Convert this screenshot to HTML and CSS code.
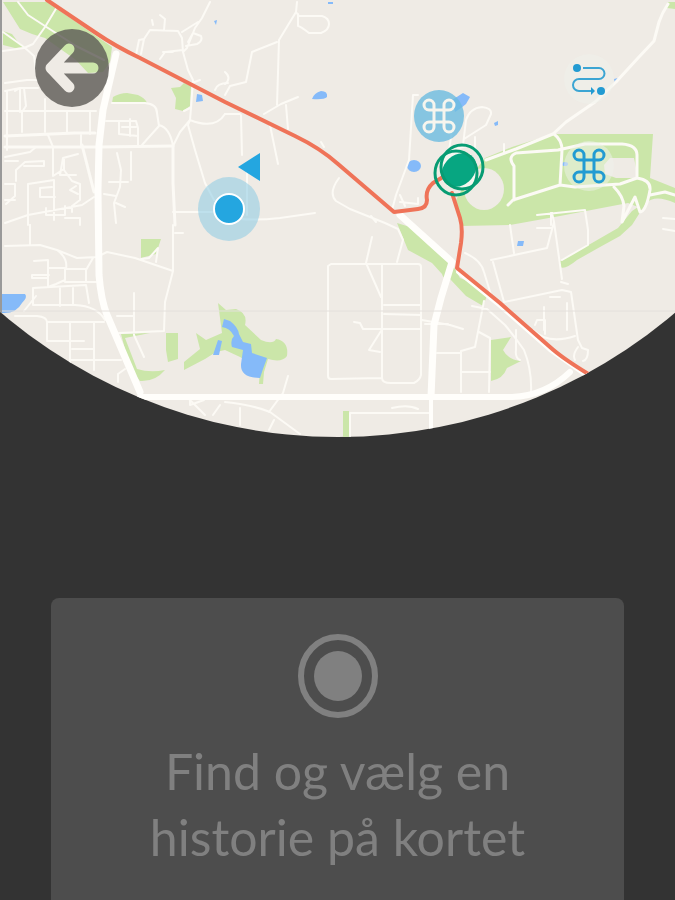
FILE: index.html
```html
<!DOCTYPE html>
<html lang="da">
<head>
<meta charset="utf-8">
<meta name="viewport" content="width=device-width, initial-scale=1">
<title>Historier på kortet</title>
<link rel="stylesheet" href="styles.css">
</head>
<body>
<main class="screen">
  <section class="map" aria-label="Kort">
    <svg class="map-art" viewBox="0 0 675 438" aria-hidden="true">
      <defs>
        <clipPath id="lens"><circle cx="338" cy="-82" r="519"/></clipPath>
      </defs>
      <g clip-path="url(#lens)">
        <rect class="land" width="675" height="438"/>

        <!-- parks -->
        <g class="park">
          <path d="M3 2H47L76 22L112 47L110 62L103 72L88 73L76 60L45 38L32 34L20 29Z"/>
          <path d="M3 31L12 34L18 42L25 47L15 48L3 45Z"/>
          <path d="M113 97Q120 93 127 93L138 95Q145 98 147 103L127 102L112 103Z"/>
          <path d="M171 88L180 87L184 83L191 86L190 106L183 111L175 109L176 98Z"/>
          <path d="M141 239H161L156 254L141 258Z"/>
          <path d="M485 158L512 147L553 134L653 134L650 178L675 188V203Q655 194 646 203L632 225L620 236L600 247L577 260Q565 270 560 267L560 261L592 243L618 228L632 211L638 207L628 203L560 216L510 225L461 226L456 200L466 182Z"/>
          <path d="M668 2H675V9L667 8Z"/>
          <path d="M397 223L410 227L430 242L452 264L460 278L475 284L487 296L483 306L466 296L450 279Q444 281 442 274L432 263L408 250Z"/>
          <path d="M166 333H178V359L168 362L166 350Z"/>
          <path d="M121 334L150 333L125 338L137 369Q150 373 165 370Q155 382 140 381L130 368Z"/>
          <path d="M184 370V362L200 349L196 333L206 340L222 333L218 303L226 310L236 309Q248 313 245 325L261 340Q273 345 276 339Q289 341 287 356Q282 363 268 359L264 372L263 384H259L260 369L240 357L225 350L216 352L205 359Z"/>
          <path d="M491 340L511 337L503 350Q508 360 521 361L507 368Q503 379 491 381Z"/>
          <path d="M343 411H349V438H343Z"/>
        </g>
        <ellipse class="land" cx="484" cy="189" rx="20" ry="21"/>
        <path class="land" d="M604 165L610 158H634L638 178L616 178L605 174Z"/>

        <!-- lakes -->
        <g class="water">
          <path d="M2 294H25Q28 297 22 303Q16 314 2 313Z"/>
          <path d="M197 94L202 95L203 101L196 102Z"/>
          <path d="M312 99Q314 93 321 91Q328 91 327 97Q324 100 312 99Z"/>
          <path d="M328 2H333V4H328Z"/>
          <ellipse cx="414" cy="166" rx="7" ry="6"/>
          <path d="M452 100L463 93L470 97L466 104L461 108L455 112Z"/>
          <path d="M494 123L498 121L498 125L495 126Z"/>
          <path d="M614 79L618 78L615 83Z"/>
          <path d="M518 241L524 241L523 246L517 246Z"/>
          <ellipse cx="565" cy="164" rx="3" ry="2"/>
          <path d="M214 21L217 20L216 25Z"/>
          <path d="M224 319L230 321Q238 327 239 334L243 342L251 344L252 353L267 358L263 369L260 378Q240 378 241 364L243 350L232 347Q230 340 234 336Q230 328 222 327Z"/>
          <path d="M218 340L222 341L219 355L213 355Z"/>
        </g>

        <!-- small streets, north-west -->
        <g class="street">
          <path d="M18 2L28 15L48 28L76 46L104 60M57 7L45 27L33 44L24 48L3 51M3 32L24 47L34 56L36 70"/>
          <path d="M5 83L27 80H38M20 88V112M24 88L26 106L22 112V132M45 99V132M67 112V132M90 112V134M5 111H96M5 91L20 88H38M7 91V150M15 91L20 88"/>
          <path class="wide" d="M5 136L75 133L95 133M5 147H100L173 146"/>
          <path d="M48 135L53 147M81 135V147M5 157L30 152L36 147M53 147V176L64 169M16 181V170L25 162L44 161V166H24M5 161H18M76 175H60L63 158L78 154M64 158V170L72 181L80 184V200L72 206V212M5 184H15V196L6 204M28 184L54 180M28 184V225M40 188L52 187M40 188V197H55M54 180V220M76 186L70 190L78 194M5 200H15M5 223L28 215L82 205L94 197M46 208V215H65V206M65 218H80V225M30 225L30 245"/>
          <path class="wide" d="M82 145L94 192M173 146V183L175 225"/>
          <path d="M112 103H145Q157 104 157 113L159 126L150 136L142 145M159 125Q170 128 173 146L180 132L190 120M106 121H136L138 128V145M119 121V134L138 136M122 127H136M130 119V136M131 152V180M117 153L121 170L120 187L114 203L116 223M109 182H128M104 194L116 196M116 203L125 207"/>
          <path d="M210 2L202 18L195 28L187 48L183 52L182 38L178 31L150 30L144 39L141 54M136 55L139 40L144 39M164 30L165 19L160 15M153 25L152 20M182 32L198 22M186 46L197 44Q203 41 201 36L193 33L188 42M160 59L165 52L183 50M163 52H173M183 52L188 70L193 80L191 108L190 120L188 125L195 150L205 183L214 200M190 120Q215 130 225 114M192 83L200 80M190 108L184 111M173 212H212M225 216Q245 222 280 218L315 213M215 90Q217 83 228 83"/>
        </g>

        <!-- streets, west -->
        <g class="street">
          <path d="M30 225V245M5 246L40 245L57 250L77 258L97 257L107 252L135 258L173 271M57 250Q68 258 66 269M93 258L86 270V282H96M34 261L48 260V287L56 284L65 280V268H49M49 275H32M33 288V305H75Q97 306 105 320M33 288L86 285L89 303M60 287V306M73 288V305M65 269H86M65 282H88M32 275V278H48M24 311L36 296M15 316H37Q47 317 47 322H104M47 322V340M70 322V362M47 341H84M72 349H94M94 322V370M71 360H121M118 374V382M118 374L125 369M134 293V335L144 357M117 316L133 316M173 225V271L165 302L164 331L119 333M141 259L149 258L158 248L156 262M175 233H183"/>
          <path d="M188 398L205 415M190 400V405L204 400M213 415L220 405M225 402Q253 405 270 412L300 434M240 408V425M288 376L283 393L269 412M269 430L274 420"/>
        </g>

        <!-- streets, centre -->
        <g class="street">
          <path d="M297 2L296 12L279 40L277 105M296 12L299 16H322Q329 18 329 24T321 33H309Q300 26 298 26V14M277 42L252 52L246 82L230 86L225 95M225 72Q232 78 225 84M264 114L281 104L298 97M286 105L288 129M241 115L242 155M270 125L278 164M225 114H240M321 142L324 147M339 178Q328 193 336 201L350 209L385 223L398 229L403 240L397 262M247 172V215M371 216L376 222M418 95H413L409 160L396 195L392 210M400 195L405 206M400 202L418 204M418 198V204"/>
          <path d="M331 264H418Q421 264 421 267V375Q420 380 414 383H391Q382 383 382 378L331 379Q328 379 328 376V266ZM382 264V378M372 237L366 263L381 297M384 305H421M384 314L421 315M354 322L360 323L363 329H421M381 331L369 350L380 352M422 320L450 325M425 324H448M437 353H460M350 438V413H432M392 408Q408 404 418 409"/>
          <path d="M443 165L449 151L470 145M463 145L466 120Q470 108 482 107Q492 108 491 114L486 125L464 139M475 137V150M504 144V152M449 151L452 130"/>
        </g>

        <!-- streets, east -->
        <g class="street">
          <path class="wide" d="M668 4Q662 13 659 22L654 41L638 58L616 82L595 102L566 122L553 134L516 149L486 160"/>
          <path class="wide" d="M514 200V166Q507 157 516 153L558 150L585 144H622Q637 145 637 155V178L620 184L575 187L560 185L513 200M554 134Q562 140 562 150L560 185M614 187Q623 196 624 206L622 222L635 197L640 212Q646 212 650 190Q651 180 637 178M513 200L508 205M650 195L665 192L675 195"/>
          <path d="M537 215L585 210L588 230V245L562 260M551 213V225M510 225L514 253M491 260L547 248L554 222L562 279M554 222L552 213M537 228H552M562 290L571 292L578 340M562 290L504 302L493 262M465 253Q481 260 484 272L491 295M484 301L475 347L461 351V392M472 306L487 309L505 325Q515 337 524 350Q532 370 531 392M479 332L490 338L489 392M462 372H490M450 325L463 329M535 325L537 320H545V334M544 307V330M567 303V330M516 330V350Q515 358 520 360M533 330Q548 345 575 336M561 282L568 284M550 297H560M578 340L582 348L588 350Q588 360 583 361M578 347Q572 355 575 360M663 229L675 231M663 218L675 219"/>
        </g>

        <!-- main roads -->
        <g class="road">
          <path class="thick" d="M116 54L103 110L99 145L98 190L99 275Q101 300 107 315L140 392"/>
          <path d="M140 397H512Q545 396 570 372"/>
          <path class="thick" d="M400 215L452 262L441 298L434 325L431 397"/>
          <path class="mid" d="M431 397V438M458 272L500 306L550 350L590 378"/>
        </g>
        <path class="seam" d="M0 311H675"/>

        <!-- highlighted route -->
        <path class="route" d="M47 0L96 33Q115 46 140 58L225 102L295 136Q320 148 338 164L394 212L418 209Q427 208 427 200Q425 190 433 183L448 174M452 193L460 218Q463 228 461 243L457 268L500 303L550 347Q562 358 590 375"/>
        <path class="edge" d="M1 0V438"/>
      </g>
    </svg>

    <button class="pin back" aria-label="Tilbage">
      <svg viewBox="0 0 76 80" aria-hidden="true">
        <mask id="arrow">
          <rect width="76" height="80" fill="#fff"/>
          <path d="M35 21L17 40L35 59M17 40H59" fill="none" stroke="#000" stroke-width="11" stroke-linecap="round" stroke-linejoin="round"/>
        </mask>
        <ellipse cx="38" cy="40" rx="37" ry="39" mask="url(#arrow)"/>
      </svg>
    </button>

    <div class="pin here">
      <svg viewBox="0 0 64 90" aria-label="Din position" role="img">
        <ellipse class="halo" cx="31" cy="57" rx="31" ry="32"/>
        <circle class="dot" cx="31" cy="57" r="15"/>
        <path class="heading" d="M40 15L62 1V29Z"/>
      </svg>
    </div>

    <button class="pin sight" aria-label="Seværdighed">
      <svg viewBox="0 0 50 52" aria-hidden="true">
        <ellipse class="sight-disc" cx="25" cy="26" rx="25" ry="26"/>
        <path class="loop" d="M20 15V37A5 5 0 1 1 15 32H35A5 5 0 1 1 30 37V15A5 5 0 1 1 35 20H15A5 5 0 1 1 20 15Z"/>
      </svg>
    </button>

    <button class="pin story" aria-label="Historie">
      <svg viewBox="0 0 52 54" aria-hidden="true">
        <ellipse class="story-pale" cx="26" cy="27" rx="20" ry="17" transform="rotate(48 26 27)"/>
        <ellipse class="story-disc" cx="26" cy="27" rx="15" ry="19" transform="rotate(48 26 27)"/>
        <ellipse class="story-ring" cx="23" cy="30" rx="21" ry="22"/>
        <ellipse class="story-ring" cx="29" cy="24" rx="21" ry="22"/>
      </svg>
    </button>

    <button class="pin trail" aria-label="Rute">
      <svg viewBox="0 0 50 50" aria-hidden="true">
        <circle class="glow" cx="25" cy="25" r="25"/>
        <circle class="blue" cx="13" cy="14" r="4"/>
        <circle class="blue" cx="37" cy="37" r="4"/>
        <path class="trail-line" d="M19 14H35A5 5 0 0 1 35 25H15A6 6 0 0 0 15 37H28"/>
        <path class="blue" d="M27 33L31 37L27 41Z"/>
      </svg>
    </button>

    <button class="pin sight-east" aria-label="Seværdighed">
      <svg viewBox="0 0 50 52" aria-hidden="true">
        <circle class="glow" cx="25" cy="26" r="25"/>
        <path class="loop" d="M20 15V37A5 5 0 1 1 15 32H35A5 5 0 1 1 30 37V15A5 5 0 1 1 35 20H15A5 5 0 1 1 20 15Z"/>
      </svg>
    </button>
  </section>

  <section class="prompt">
    <svg class="target" viewBox="0 0 80 84" aria-hidden="true">
      <ellipse class="target-ring" cx="40" cy="42" rx="37" ry="39"/>
      <ellipse class="target-dot" cx="40" cy="42" rx="24" ry="25"/>
    </svg>
    <p class="prompt-text">Find og vælg en<br>historie på kortet</p>
  </section>
</main>
</body>
</html>
```

FILE: styles.css
```css
* {
  box-sizing: border-box;
}

body {
  margin: 0;
  background: #333;
}

.screen {
  display: flex;
  flex-direction: column;
  min-height: 100vh;
}

.map {
  position: relative;
}

.map-art {
  display: block;
  width: 100%;
}

.map-art path {
  stroke-linecap: round;
  stroke-linejoin: round;
}

.land {
  fill: #efebe5;
}

.park {
  fill: #cbe6a9;
}

.water {
  fill: #85baf9;
}

.street {
  fill: none;
  stroke: #fcfaf5;
  stroke-width: 2;
}

.street .wide {
  stroke-width: 3;
}

.road {
  fill: none;
  stroke: #fffefb;
  stroke-width: 6;
}

.road .thick {
  stroke-width: 7;
}

.road .mid {
  stroke-width: 4;
}

.seam {
  stroke: #e4e0dc;
}

.route {
  fill: none;
  stroke: #ef7358;
  stroke-width: 4;
}

.edge {
  stroke: #999;
  stroke-width: 2;
}

/* Pins are placed by their share of the map's width and height */
.pin {
  position: absolute;
  padding: 0;
  border: 0;
  background: none;
  transform: translate(-50%, -50%);
}

.pin svg {
  display: block;
  width: 100%;
}

.back {
  left: 10.6%;
  top: 15.6%;
  width: 76px;
  fill: #5d5b56;
  fill-opacity: 0.9;
}

.here {
  left: 34.1%;
  top: 44.9%;
  width: 64px;
}

.halo {
  fill: #8bcbe4;
  fill-opacity: 0.55;
}

.dot {
  fill: #24a6e0;
  stroke: #fff;
  stroke-width: 2;
}

.heading {
  fill: #24a6e0;
}

.sight {
  left: 65%;
  top: 26.5%;
  width: 50px;
}

.sight-disc {
  fill: #6bbbe0;
  fill-opacity: 0.8;
}

.loop {
  fill: none;
  stroke: #f6f5ee;
  stroke-width: 3;
}

.story {
  left: 68%;
  top: 38.8%;
  width: 52px;
}

.story-pale {
  fill: #f5f7f0;
}

.story-disc {
  fill: #07a681;
}

.story-ring {
  fill: none;
  stroke: #079c73;
  stroke-width: 3;
}

.trail {
  left: 87.2%;
  top: 18%;
  width: 50px;
}

.glow {
  fill: #f0f2ec;
  fill-opacity: 0.5;
}

.blue {
  fill: #229bd2;
}

.trail-line {
  fill: none;
  stroke: #3ba5d3;
  stroke-width: 2;
}

.sight-east {
  left: 87.2%;
  top: 37.8%;
  width: 50px;
}

.sight-east .loop {
  stroke: #229bd2;
}

.prompt {
  display: flex;
  flex: 1;
  flex-direction: column;
  align-items: center;
  gap: 20px;
  width: 85%;
  margin: 160px auto 0;
  padding: 36px 16px 24px;
  border-radius: 8px 8px 0 0;
  background: #4d4d4d;
}

.target {
  width: 80px;
}

.target-ring {
  fill: none;
  stroke: #808080;
  stroke-width: 6;
}

.target-dot {
  fill: #808080;
}

.prompt-text {
  margin: 0;
  color: #808080;
  font-family: Lato, "Open Sans", sans-serif;
  font-size: 50px;
  font-weight: 400;
  line-height: 66px;
  text-align: center;
}
```
